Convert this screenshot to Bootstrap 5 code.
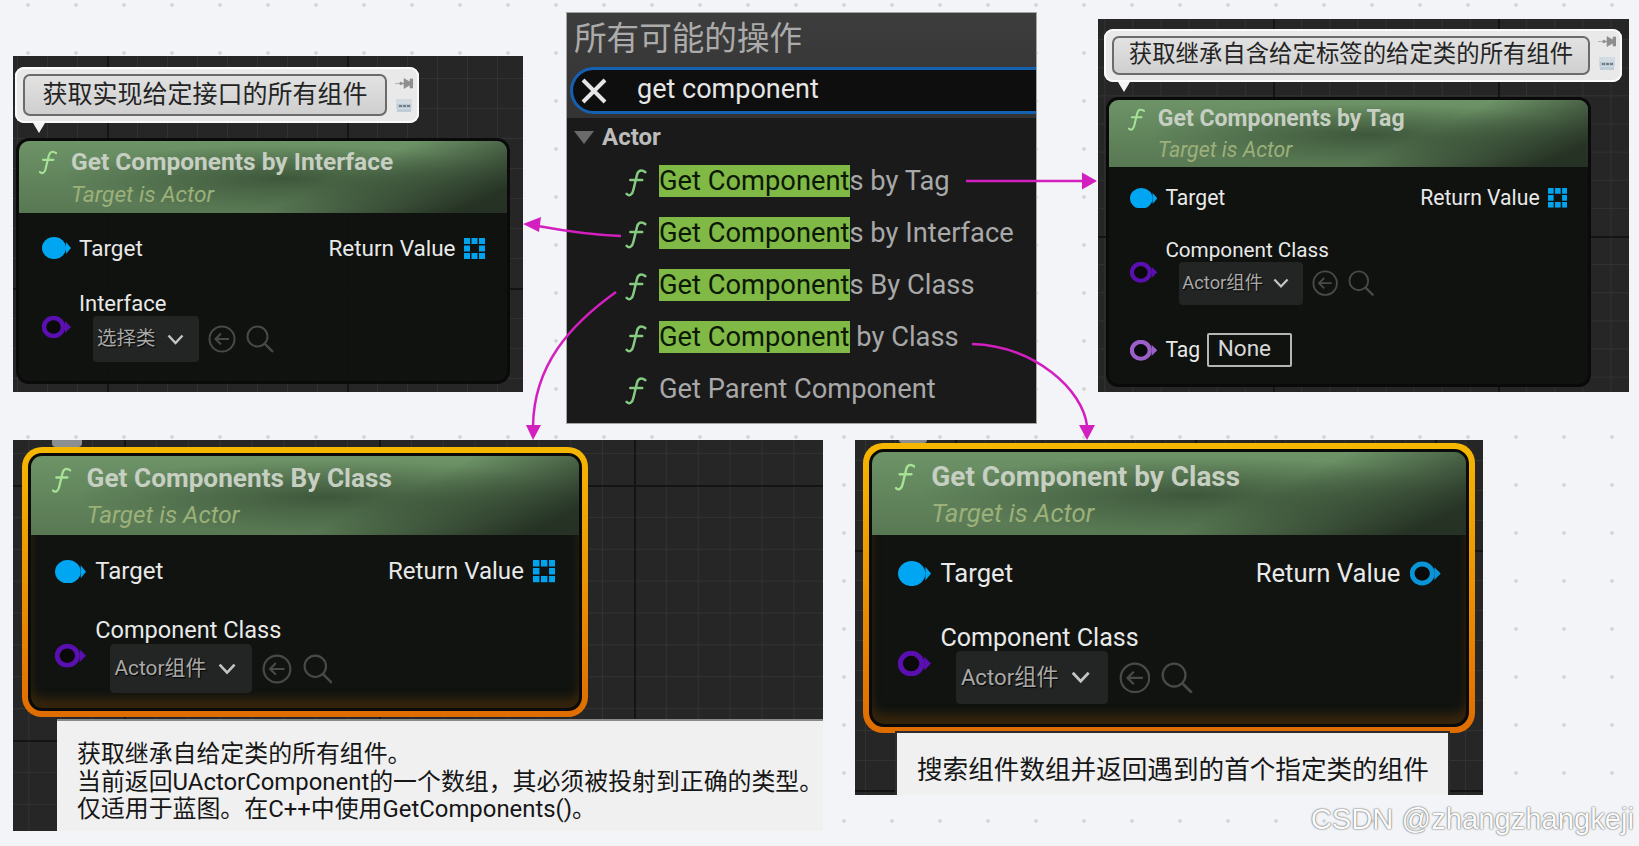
<!DOCTYPE html>
<html lang="zh">
<head>
<meta charset="UTF-8">
<title>Get Component</title>
<link href="https://cdn.jsdelivr.net/npm/bootstrap@5.3.3/dist/css/bootstrap.min.css" rel="stylesheet">
<style>
html, body { height: 846px; overflow: hidden; }
body {
    font-family: Roboto, "Noto Sans CJK SC", sans-serif;
    background-color: #f3f4f7;
    background-image: radial-gradient(circle, #d6d7db 0 1.6px, transparent 2px);
    background-size: 48px 48px;
    background-position: 4px -19px;
}
.desk { width: 1639px; height: 846px; }

/* graph canvas windows */
.cv {
    background-color: #262626;
    background-image:
        linear-gradient(#141414 0 2px, transparent 2px),
        linear-gradient(90deg, #141414 0 2px, transparent 2px),
        linear-gradient(#323232 0 1px, transparent 1px),
        linear-gradient(90deg, #323232 0 1px, transparent 1px);
    background-size: var(--gs) var(--gs), var(--gs) var(--gs), calc(var(--gs) / 8) calc(var(--gs) / 8), calc(var(--gs) / 8) calc(var(--gs) / 8);
    background-position: var(--gx) var(--gy);
}
.cv-iface { left: 13px; top: 56px; width: 510px; height: 336px; --gs: 240px; --gx: 94px; --gy: 232px; }
.cv-tag { left: 1098px; top: 19px; width: 531px; height: 373px; --gs: 225px; --gx: 175px; --gy: 217px; }
.cv-class { left: 13px; top: 440px; width: 810px; height: 391px; --gs: 255px; --gx: 621px; --gy: 45px; }
.cv-first { left: 855px; top: 440px; width: 628px; height: 355px; --gs: 240px; --gx: 100px; --gy: 110px; }

/* comment bubble */
.bubble {
    position: relative;
    background: #e9e9e9;
    border-radius: 9px;
    box-shadow: inset 0 0 0 2px #fafafa;
    padding: 7px 6px 7px 8px;
    gap: 8px;
}
.bubble::after {
    content: "";
    position: absolute;
    top: 100%;
    left: 18px;
    border: 6px solid transparent;
    border-top: 10px solid #f4f4f4;
    border-bottom: 0;
}
.bubble-box {
    flex: 1;
    border: 2px solid #6b6b6b;
    border-radius: 7px;
    background: linear-gradient(#e2e2e2, #cfcfcf);
    color: #242424;
    text-align: center;
}
.bubble-icons { width: 18px; gap: 9px; }
.bubble-a { margin: 11px 0 0 2px; width: 404px; height: 56px; font-size: 25px; }
.bubble-a .bubble-box { line-height: 37px; }
.bubble-b { margin: 10px 0 0 6px; width: 518px; height: 53px; font-size: 23.4px; }
.bubble-b .bubble-box { line-height: 33px; }
.bubble-b::after { left: 14px; }
.bubble-peek { background: #8c8f91; border-radius: 0 0 4px 4px; }
.peek-c { width: 30px; height: 7px; margin-left: 39px; }
.peek-d { width: 28px; height: 3px; margin-left: 44px; }

/* blueprint node */
.bp {
    --u: calc(var(--k) * 1px);
    width: var(--w);
    height: var(--h);
    border: 3px solid #0a0a0a;
    border-radius: calc(var(--u) * 13);
    background: rgba(15, 18, 15, .96);
    font-size: calc(var(--u) * 22.5);
    color: #e9e9e9;
    overflow: hidden;
}
.bp-a { --k: 1; --w: 494px; --h: 246px; --hh: 72px; --ht: 4; --bt: 23; margin: 15px 0 0 3px; }
.bp-b { --k: .94; --w: 485px; --h: 290px; --hh: 67px; --ht: 3; --bt: 21; margin: 15px 0 0 8px; }
.bp-c { --k: 1.07; --w: 554px; --h: 258px; --hh: 79px; --ht: 5; --bt: 22; }
.bp-d { --k: 1.14; --w: 600px; --h: 278px; --hh: 83px; --ht: 5; --bt: 22; }
.bp-c, .bp-d { background: #101310; box-shadow: inset 0 -10px 10px rgba(140, 75, 0, .3); }
.halo {
    padding: 6px;
    border-radius: 20px;
    background: linear-gradient(#f6b700, #df6c00);
    position: relative;
}
.halo-c { margin-left: 9px; width: 566px; }
.halo-d { margin-left: 8px; width: 612px; }
.bp-head {
    height: var(--hh);
    padding: calc(var(--u) * var(--ht)) 0 0 calc(var(--u) * 20);
    gap: calc(var(--u) * 14);
    background:
        radial-gradient(ellipse 46% 46% at 54% 52%, rgba(26, 42, 26, .5), transparent),
        linear-gradient(155deg, transparent 62%, rgba(24, 32, 24, .8) 92%),
        linear-gradient(#6d9367, #587853);
}
.bp-fn { width: calc(var(--u) * 18); height: calc(var(--u) * 25); color: #a6e295; margin-top: calc(var(--u) * 5); }
.bp-title { font-size: calc(var(--u) * 24.5); line-height: calc(var(--u) * 33); font-weight: 700; color: #c6cfc2; white-space: nowrap; }
.bp-sub { font-size: calc(var(--u) * 22.7); line-height: calc(var(--u) * 33); font-style: italic; color: #9cb07a; }
.bp-body { padding: calc(var(--u) * var(--bt)) calc(var(--u) * 22) 0 calc(var(--u) * 22.500); line-height: calc(var(--u) * 24); }
.bp-row { gap: calc(var(--u) * 8.500); }
.bp-row2 { margin-top: calc(var(--u) * 32); }
.bp-row3 { margin-top: calc(var(--u) * 30); }
.bp-label { font-size: calc(var(--u) * 22); }
.pin { width: calc(var(--u) * 29); height: calc(var(--u) * 22); flex: none; }
.pin-exec { color: #00a6f2; }
.pin-class { color: #5a0fb0; }
.pin-name { color: #9a5fc8; }
.pin-out { color: #0a94d8; width: calc(var(--u) * 27); }
.ico-grid { width: calc(var(--u) * 21); height: calc(var(--u) * 21); color: #00a3ee; }
.picker { margin-left: calc(var(--u) * 14); gap: calc(var(--u) * 9.500); }
.picker-box {
    height: calc(var(--u) * 46);
    padding: 0 calc(var(--u) * 15) 0 calc(var(--u) * 4);
    gap: calc(var(--u) * 11);
    background: #222523;
    border-radius: calc(var(--u) * 4);
    font-size: calc(var(--u) * 19.500);
    color: #a9a9a9;
    text-shadow: 1px 1px 1px #000;
}
.ico-chev { width: calc(var(--u) * 17); height: calc(var(--u) * 11); color: #c4c4c4; }
.ico-tool { width: calc(var(--u) * 28); height: calc(var(--u) * 28); color: #474a48; }
.tag-field {
    margin-left: calc(var(--u) * -1);
    width: calc(var(--u) * 90);
    height: calc(var(--u) * 36);
    line-height: calc(var(--u) * 30);
    padding-left: calc(var(--u) * 9);
    border: 2px solid #b5b5b5;
    border-radius: 2px;
    font-size: calc(var(--u) * 24);
    color: #d8d8d8;
}

/* description tooltips */
.hint { position: relative; background: #f0f0f0; color: #161616; white-space: nowrap; }
.hint-c { margin: 4px 0 0 44px; height: 110px; padding: 20px 0 0 20px; font-size: 23.9px; line-height: 27.6px; box-shadow: 0 -2px 0 #8a8a8a; }
.hint-d { margin: -2px 0 0 40px; width: 555px; height: 70px; padding: 20px 0 0 20px; font-size: 25.6px; line-height: 34px; border: 2px solid #2d2d2d; border-bottom: 0; }

/* action menu */
.actions { left: 567px; top: 13px; width: 469px; height: 410px; background: #1a1a1a; box-shadow: 0 0 0 1px #a5a5a5; }
.actions-top { height: 105px; background: linear-gradient(#3d3d3d, #333); padding: 3px 0 0 7px; }
.actions-title { font-size: 32.6px; line-height: 46px; color: #ababab; }
.finder {
    margin: 5px 0 0 -4px;
    height: 47px;
    background: #0e0e0e;
    border: 3px solid #1560b0;
    border-right: 0;
    border-radius: 24px 0 0 24px;
    font-size: 27px;
    line-height: 30px;
    color: #e6e6e6;
    padding-left: 7px;
    gap: 29px;
}
.finder span { margin-top: -3px; }
.finder svg { width: 28px; height: 26px; color: #e6e6e6; }
.actions-group { padding: 5px 0 0 7px; font-size: 24px; line-height: 28px; font-weight: 700; color: #bcbcbc; gap: 8px; }
.tri { width: 20px; height: 13px; color: #6a6a6a; }
.action { height: 52px; padding-left: 58px; gap: 12px; font-size: 27.3px; color: #a8a8a8; white-space: nowrap; }
.action svg { width: 22px; height: 28px; color: #86cb80; margin-top: 4px; }
.hit { background: #80b945; color: #0b1805; }
.action-list { padding-top: 4px; }

.links { left: 0; top: 0; pointer-events: none; }
.stamp { right: 5px; top: 802px; font-family: "Liberation Sans", sans-serif; font-size: 29.2px; line-height: 34px; color: #fbfbfb; text-shadow: 0 0 2px #666, 0 0 1px #666; white-space: nowrap; }
</style>
</head>
<body>
<svg width="0" height="0" class="position-absolute">
    <symbol id="s-fn" viewBox="0 0 20 27"><path d="M19 3C15 .3 12 1.500 11 5.500L7.500 20C6.500 25 3.500 26.500 1 24M4.500 10.500H16" fill="none" stroke="currentColor" stroke-width="2.400" stroke-linecap="round"/></symbol>
    <symbol id="s-pinfill" viewBox="0 0 29 22"><ellipse cx="12" cy="11" rx="12" ry="11" fill="currentColor"/><path d="M24 5 29 11l-5 6z" fill="currentColor"/></symbol>
    <symbol id="s-pinring" viewBox="0 0 29 22"><ellipse cx="11.500" cy="11" rx="9.500" ry="9" fill="#0a0a0a" stroke="currentColor" stroke-width="4.500"/><path d="M23 5 29 11l-6 6z" fill="currentColor"/></symbol>
    <symbol id="s-grid" viewBox="0 0 21 21"><path d="M0 0h6v6H0zM7.500 0h6v6h-6zM15 0h6v6h-6zM0 7.500h6v6H0zM15 7.500h6v6h-6zM0 15h6v6H0zM7.500 15h6v6h-6zM15 15h6v6h-6z" fill="currentColor"/></symbol>
    <symbol id="s-chev" viewBox="0 0 17 11"><path d="M1.500 1.500 8.500 9l7-7.500" fill="none" stroke="currentColor" stroke-width="2.400"/></symbol>
    <symbol id="s-back" viewBox="0 0 28 28"><circle cx="14" cy="14" r="12.500" fill="none" stroke="currentColor" stroke-width="2"/><path d="M21 14H8M13 8.500 7.500 14l5.500 5.500" fill="none" stroke="currentColor" stroke-width="2"/></symbol>
    <symbol id="s-find" viewBox="0 0 28 28"><circle cx="11.500" cy="11.500" r="10" fill="none" stroke="currentColor" stroke-width="2"/><path d="m18.500 18.500 8.500 8.500" stroke="currentColor" stroke-width="2.400"/></symbol>
    <symbol id="s-nail" viewBox="0 0 18 11"><path d="M0 5.500h5M5 4 9 5.500 5 7zM9 .5l5 3h1V1h3v9h-3V7.500h-1l-5 3z" fill="currentColor" stroke="currentColor" stroke-width=".6"/></symbol>
    <symbol id="s-note" viewBox="0 0 18 15"><path d="M1 1h16v10H1z" fill="#d3dbe2"/><path d="M2 11h14v3H2z" fill="#c0ccd6"/><path d="M2 6h14v4H2z" fill="#bcc8d2"/><path d="M4 7h3v2H4zM8 7h3v2H8zM12 7h3v2h-3z" fill="#6f7f8c"/></symbol>
</svg>

<div class="desk position-relative">

    <section class="cv cv-iface position-absolute overflow-hidden">
        <div class="bubble bubble-a d-flex">
            <div class="bubble-box">获取实现给定接口的所有组件</div>
            <div class="bubble-icons d-flex flex-column align-items-center pt-1">
                <svg width="18" height="11" color="#8e8e8e"><use href="#s-nail"/></svg>
                <svg width="18" height="15"><use href="#s-note"/></svg>
            </div>
        </div>
        <div class="bp bp-a">
            <div class="bp-head d-flex">
                <svg class="bp-fn flex-none"><use href="#s-fn"/></svg>
                <div>
                    <div class="bp-title">Get Components by Interface</div>
                    <div class="bp-sub">Target is Actor</div>
                </div>
            </div>
            <div class="bp-body">
                <div class="d-flex justify-content-between align-items-center">
                    <div class="bp-row d-flex align-items-center"><svg class="pin pin-exec"><use href="#s-pinfill"/></svg>Target</div>
                    <div class="bp-row d-flex align-items-center">Return Value <svg class="ico-grid"><use href="#s-grid"/></svg></div>
                </div>
                <div class="bp-row bp-row2 d-flex align-items-center">
                    <svg class="pin pin-class"><use href="#s-pinring"/></svg>
                    <div>
                        <div class="bp-label">Interface</div>
                        <div class="picker d-flex align-items-center">
                            <div class="picker-box d-flex align-items-center">选择类 <svg class="ico-chev"><use href="#s-chev"/></svg></div>
                            <svg class="ico-tool"><use href="#s-back"/></svg>
                            <svg class="ico-tool"><use href="#s-find"/></svg>
                        </div>
                    </div>
                </div>
            </div>
        </div>
    </section>

    <section class="actions position-absolute overflow-hidden">
        <div class="actions-top">
            <div class="actions-title">所有可能的操作</div>
            <div class="finder d-flex align-items-center">
                <svg viewBox="0 0 28 26"><path d="M3 2l22 22M25 2 3 24" stroke="currentColor" stroke-width="4" fill="none"/></svg>
                <span>get component</span>
            </div>
        </div>
        <div class="actions-group d-flex align-items-center">
            <svg class="tri" viewBox="0 0 20 13"><path d="M0 0h20L10 13z" fill="currentColor"/></svg>Actor
        </div>
        <ul class="action-list list-unstyled mb-0">
            <li class="action d-flex align-items-center"><svg><use href="#s-fn"/></svg><span><span class="hit">Get Component</span>s by Tag</span></li>
            <li class="action d-flex align-items-center"><svg><use href="#s-fn"/></svg><span><span class="hit">Get Component</span>s by Interface</span></li>
            <li class="action d-flex align-items-center"><svg><use href="#s-fn"/></svg><span><span class="hit">Get Component</span>s By Class</span></li>
            <li class="action d-flex align-items-center"><svg><use href="#s-fn"/></svg><span><span class="hit">Get Component</span> by Class</span></li>
            <li class="action d-flex align-items-center"><svg><use href="#s-fn"/></svg><span>Get Parent Component</span></li>
        </ul>
    </section>

    <section class="cv cv-tag position-absolute overflow-hidden">
        <div class="bubble bubble-b d-flex">
            <div class="bubble-box">获取继承自含给定标签的给定类的所有组件</div>
            <div class="bubble-icons d-flex flex-column align-items-center">
                <svg width="18" height="11" color="#8e8e8e"><use href="#s-nail"/></svg>
                <svg width="18" height="15"><use href="#s-note"/></svg>
            </div>
        </div>
        <div class="bp bp-b">
            <div class="bp-head d-flex">
                <svg class="bp-fn flex-none"><use href="#s-fn"/></svg>
                <div>
                    <div class="bp-title">Get Components by Tag</div>
                    <div class="bp-sub">Target is Actor</div>
                </div>
            </div>
            <div class="bp-body">
                <div class="d-flex justify-content-between align-items-center">
                    <div class="bp-row d-flex align-items-center"><svg class="pin pin-exec"><use href="#s-pinfill"/></svg>Target</div>
                    <div class="bp-row d-flex align-items-center">Return Value <svg class="ico-grid"><use href="#s-grid"/></svg></div>
                </div>
                <div class="bp-row bp-row2 d-flex align-items-center">
                    <svg class="pin pin-class"><use href="#s-pinring"/></svg>
                    <div>
                        <div class="bp-label">Component Class</div>
                        <div class="picker d-flex align-items-center">
                            <div class="picker-box d-flex align-items-center">Actor组件 <svg class="ico-chev"><use href="#s-chev"/></svg></div>
                            <svg class="ico-tool"><use href="#s-back"/></svg>
                            <svg class="ico-tool"><use href="#s-find"/></svg>
                        </div>
                    </div>
                </div>
                <div class="bp-row bp-row3 d-flex align-items-center">
                    <svg class="pin pin-name"><use href="#s-pinring"/></svg>Tag
                    <div class="tag-field">None</div>
                </div>
            </div>
        </div>
    </section>

    <section class="cv cv-class position-absolute overflow-hidden">
        <div class="bubble-peek peek-c"></div>
        <div class="halo halo-c">
            <div class="bp bp-c">
                <div class="bp-head d-flex">
                    <svg class="bp-fn flex-none"><use href="#s-fn"/></svg>
                    <div>
                        <div class="bp-title">Get Components By Class</div>
                        <div class="bp-sub">Target is Actor</div>
                    </div>
                </div>
                <div class="bp-body">
                    <div class="d-flex justify-content-between align-items-center">
                        <div class="bp-row d-flex align-items-center"><svg class="pin pin-exec"><use href="#s-pinfill"/></svg>Target</div>
                        <div class="bp-row d-flex align-items-center">Return Value <svg class="ico-grid"><use href="#s-grid"/></svg></div>
                    </div>
                    <div class="bp-row bp-row2 d-flex align-items-center">
                        <svg class="pin pin-class"><use href="#s-pinring"/></svg>
                        <div>
                            <div class="bp-label">Component Class</div>
                            <div class="picker d-flex align-items-center">
                                <div class="picker-box d-flex align-items-center">Actor组件 <svg class="ico-chev"><use href="#s-chev"/></svg></div>
                                <svg class="ico-tool"><use href="#s-back"/></svg>
                                <svg class="ico-tool"><use href="#s-find"/></svg>
                            </div>
                        </div>
                    </div>
                </div>
            </div>
        </div>
        <div class="hint hint-c">获取继承自给定类的所有组件。<br>当前返回UActorComponent的一个数组，其必须被投射到正确的类型。<br>仅适用于蓝图。在C++中使用GetComponents()。</div>
    </section>

    <section class="cv cv-first position-absolute overflow-hidden">
        <div class="bubble-peek peek-d"></div>
        <div class="halo halo-d">
            <div class="bp bp-d">
                <div class="bp-head d-flex">
                    <svg class="bp-fn flex-none"><use href="#s-fn"/></svg>
                    <div>
                        <div class="bp-title">Get Component by Class</div>
                        <div class="bp-sub">Target is Actor</div>
                    </div>
                </div>
                <div class="bp-body">
                    <div class="d-flex justify-content-between align-items-center">
                        <div class="bp-row d-flex align-items-center"><svg class="pin pin-exec"><use href="#s-pinfill"/></svg>Target</div>
                        <div class="bp-row d-flex align-items-center">Return Value <svg class="pin pin-out"><use href="#s-pinring"/></svg></div>
                    </div>
                    <div class="bp-row bp-row2 d-flex align-items-center">
                        <svg class="pin pin-class"><use href="#s-pinring"/></svg>
                        <div>
                            <div class="bp-label">Component Class</div>
                            <div class="picker d-flex align-items-center">
                                <div class="picker-box d-flex align-items-center">Actor组件 <svg class="ico-chev"><use href="#s-chev"/></svg></div>
                                <svg class="ico-tool"><use href="#s-back"/></svg>
                                <svg class="ico-tool"><use href="#s-find"/></svg>
                            </div>
                        </div>
                    </div>
                </div>
            </div>
        </div>
        <div class="hint hint-d">搜索组件数组并返回遇到的首个指定类的组件</div>
    </section>

    <svg class="links position-absolute" width="1639" height="846" fill="none" stroke="#d41fc0" stroke-width="2.500">
        <path d="M621 236C595 235 565 231 538 226"/>
        <path d="M523 224 541 217 539 232z" fill="#d41fc0" stroke="none"/>
        <path d="M616 292C570 325 534 365 533 426"/>
        <path d="M533 440 526 425H541z" fill="#d41fc0" stroke="none"/>
        <path d="M966 181H1084"/>
        <path d="M1097 181 1082 172.500V189.500z" fill="#d41fc0" stroke="none"/>
        <path d="M972 344C1035 346 1083 390 1087 426"/>
        <path d="M1087 440 1079 425H1095z" fill="#d41fc0" stroke="none"/>
    </svg>

    <div class="stamp position-absolute">CSDN @zhangzhangkeji</div>
</div>

<script src="https://cdn.jsdelivr.net/npm/bootstrap@5.3.3/dist/js/bootstrap.bundle.min.js"></script>
</body>
</html>
